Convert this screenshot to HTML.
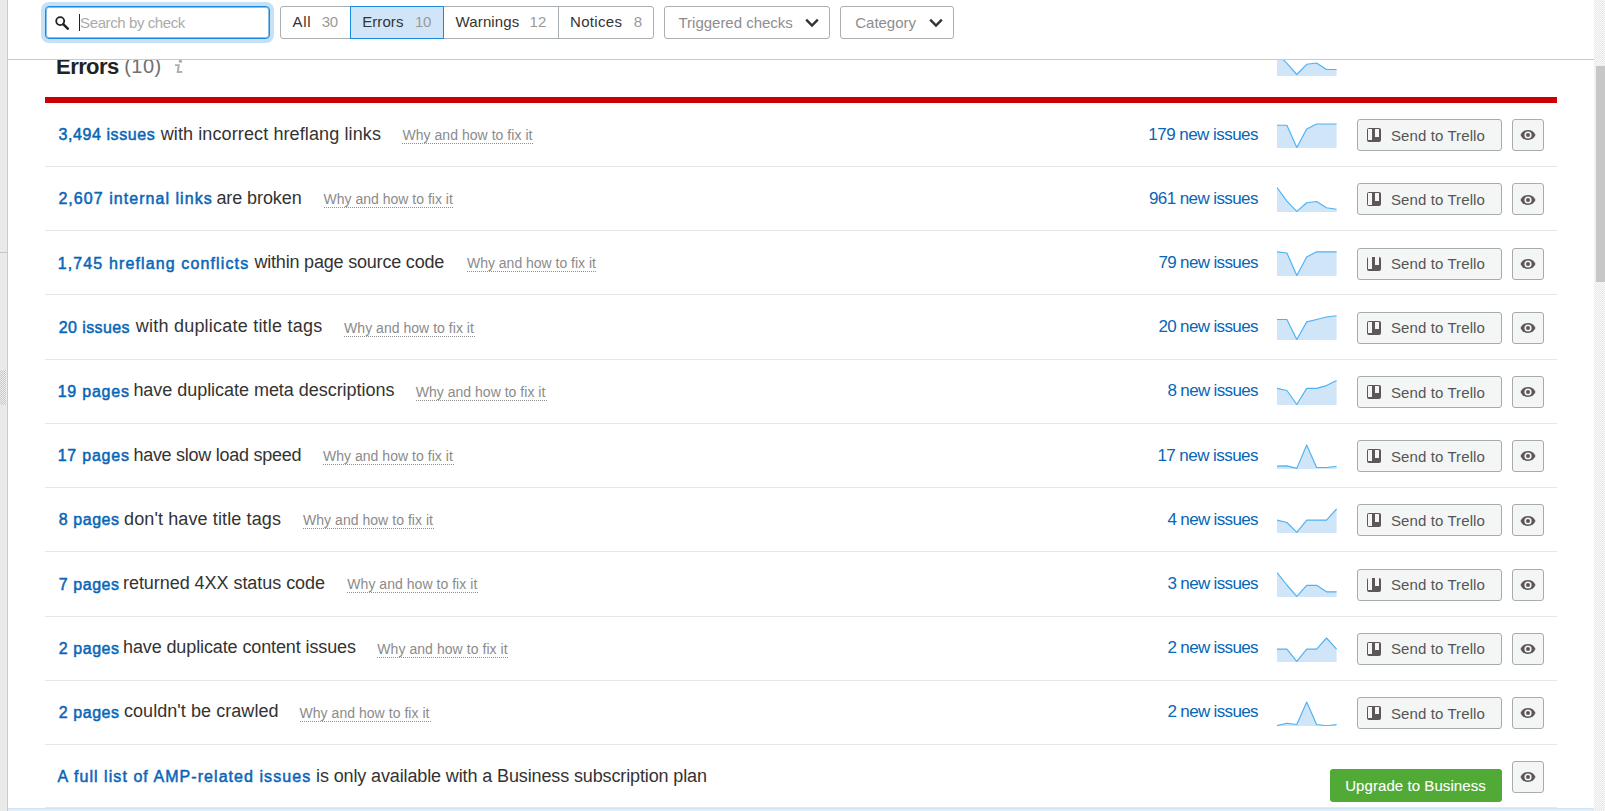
<!DOCTYPE html>
<html><head><meta charset="utf-8"><style>
html,body{margin:0;padding:0;}
body{width:1605px;height:811px;overflow:hidden;position:relative;background:#fff;font-family:"Liberation Sans", sans-serif;}
.t{position:absolute;white-space:pre;}
.lstrip{position:absolute;left:0;top:0;width:7px;height:811px;background:#e9ebea;}
.lline{position:absolute;left:7px;top:0;width:1px;height:811px;background:#c8cbca;}
.sb{position:absolute;left:1594px;top:0;width:11px;height:811px;background:repeating-conic-gradient(#e8e9e8 0 25%,#f9f9f9 0 50%) 0 0/2px 2px;}
.thumb{position:absolute;left:1596px;top:66px;width:9px;height:216px;background:#c6c7c6;}
.hdr{position:absolute;left:8px;top:0;width:1586px;height:59px;background:#fff;border-bottom:1px solid #c8cbca;z-index:10;}
.red{position:absolute;left:45px;top:97px;width:1512px;height:6px;background:#cc0000;}
.ul{position:absolute;height:1px;background:repeating-linear-gradient(90deg,#8f8f8f 0 1px,transparent 1px 2px);}
.sep{position:absolute;left:45px;width:1512px;height:1px;background:#e2e9ee;}
.sp{position:absolute;left:1277px;}
.btn{position:absolute;box-sizing:border-box;height:32px;border:1px solid #a5acaf;border-radius:3px;background:#f4f5f5;}
.trello{left:1357px;width:145px;}
.eye{left:1512px;width:32px;}
.eye svg{position:absolute;left:6.5px;top:9.2px;}
.ti{position:absolute;left:9px;top:8px;width:14px;height:14px;background:#5e5758;border-radius:2px;}
.ti b{position:absolute;left:1.3px;top:0.9px;width:4px;height:11.3px;background:#f4f5f5;}
.ti s{position:absolute;left:8px;top:0.9px;width:3.7px;height:7.6px;background:#f4f5f5;}
.green{position:absolute;left:1330px;top:769px;width:172px;height:33px;background:#50aa35;border-radius:3px;}
.search{position:absolute;left:45px;top:6px;width:225px;height:33px;box-sizing:border-box;border:1px solid #1a8adf;border-radius:4px;box-shadow:inset 0 0 0 1px rgba(26,138,223,0.55),0 0 0 4px #c6e1f6;background:#fff;}
.seg{position:absolute;left:280px;top:6px;width:374px;height:33px;box-sizing:border-box;border:1px solid #a9b0b3;border-radius:3px;background:#fff;}
.segon{position:absolute;left:350px;top:6px;width:94px;height:33px;box-sizing:border-box;border:1px solid #1a8adf;background:#d0e5f8;}
.segdiv{position:absolute;left:558px;top:6px;width:1px;height:33px;background:#a9b0b3;}
.dd{position:absolute;top:6px;height:33px;box-sizing:border-box;border:1px solid #a9b0b3;border-radius:3px;background:#fff;}
.bottom1{position:absolute;left:45px;top:807px;width:1512px;height:1px;background:#e6e9eb;}
.bottom2{position:absolute;left:8px;top:808px;width:1586px;height:1px;background:#cfe4f5;}
.bottom3{position:absolute;left:8px;top:809px;width:1586px;height:2px;background:#deedf8;}
</style></head><body>
<div class="lstrip"></div><div class="lline"></div>
<div style="position:absolute;left:0;top:252px;width:7px;height:1px;background:#c5c6c5"></div>
<div style="position:absolute;left:0;top:370px;width:6px;height:35px;background:repeating-conic-gradient(#c8cac8 0 25%,#edefed 0 50%) 0 0/2px 2px"></div>
<div class="sb"></div><div class="thumb"></div>
<div class="red"></div>
<div class="sep" style="top:166px"></div><div class="sep" style="top:230px"></div><div class="sep" style="top:294px"></div><div class="sep" style="top:359px"></div><div class="sep" style="top:423px"></div><div class="sep" style="top:487px"></div><div class="sep" style="top:551px"></div><div class="sep" style="top:616px"></div><div class="sep" style="top:680px"></div><div class="sep" style="top:744px"></div>
<div class="ul" style="left:402px;top:143px;width:132px"></div><div class="ul" style="left:324px;top:207px;width:130px"></div><div class="ul" style="left:467px;top:271px;width:130px"></div><div class="ul" style="left:344px;top:336px;width:131px"></div><div class="ul" style="left:416px;top:400px;width:131px"></div><div class="ul" style="left:323px;top:464px;width:131px"></div><div class="ul" style="left:303px;top:528px;width:131px"></div><div class="ul" style="left:347px;top:592px;width:131px"></div><div class="ul" style="left:377px;top:657px;width:132px"></div><div class="ul" style="left:300px;top:721px;width:131px"></div>
<svg class="sp" style="top:49.6px" width="60" height="26" viewBox="0 0 60 26"><path d="M0,26 L0.0,3.2 L9.9,13.3 L19.8,24.5 L29.7,14.3 L39.6,13.0 L49.5,19.5 L59.6,19.5 L59.6,26 Z" fill="#d0e5f7"/><polyline points="0.0,3.2 9.9,13.3 19.8,24.5 29.7,14.3 39.6,13.0 49.5,19.5 59.6,19.5" fill="none" stroke="#4fb2f0" stroke-width="1.15" stroke-linejoin="round"/></svg><svg class="sp" style="top:121.6px" width="60" height="26" viewBox="0 0 60 26"><path d="M0,26 L0.0,3.2 L9.9,3.2 L19.8,25.4 L29.7,6.9 L39.6,2.0 L49.5,2.0 L59.6,2.0 L59.6,26 Z" fill="#d0e5f7"/><polyline points="0.0,3.2 9.9,3.2 19.8,25.4 29.7,6.9 39.6,2.0 49.5,2.0 59.6,2.0" fill="none" stroke="#4fb2f0" stroke-width="1.15" stroke-linejoin="round"/></svg><svg class="sp" style="top:185.7px" width="60" height="26" viewBox="0 0 60 26"><path d="M0,26 L0.0,1.6 L9.9,15.2 L19.8,25.4 L29.7,16.8 L39.6,15.5 L49.5,21.7 L59.6,23.2 L59.6,26 Z" fill="#d0e5f7"/><polyline points="0.0,1.6 9.9,15.2 19.8,25.4 29.7,16.8 39.6,15.5 49.5,21.7 59.6,23.2" fill="none" stroke="#4fb2f0" stroke-width="1.15" stroke-linejoin="round"/></svg><svg class="sp" style="top:249.6px" width="60" height="26" viewBox="0 0 60 26"><path d="M0,26 L0.0,1.8 L9.9,3.0 L19.8,25.5 L29.7,7.0 L39.6,1.8 L49.5,1.8 L59.6,1.8 L59.6,26 Z" fill="#d0e5f7"/><polyline points="0.0,1.8 9.9,3.0 19.8,25.5 29.7,7.0 39.6,1.8 49.5,1.8 59.6,1.8" fill="none" stroke="#4fb2f0" stroke-width="1.15" stroke-linejoin="round"/></svg><svg class="sp" style="top:313.6px" width="60" height="26" viewBox="0 0 60 26"><path d="M0,26 L0.0,5.5 L9.9,5.5 L19.8,25.5 L29.7,7.9 L39.6,5.5 L49.5,3.0 L59.6,1.8 L59.6,26 Z" fill="#d0e5f7"/><polyline points="0.0,5.5 9.9,5.5 19.8,25.5 29.7,7.9 39.6,5.5 49.5,3.0 59.6,1.8" fill="none" stroke="#4fb2f0" stroke-width="1.15" stroke-linejoin="round"/></svg><svg class="sp" style="top:378.7px" width="60" height="26" viewBox="0 0 60 26"><path d="M0,26 L0.0,9.4 L9.9,11.5 L19.8,25.5 L29.7,9.4 L39.6,9.4 L49.5,6.6 L59.6,1.6 L59.6,26 Z" fill="#d0e5f7"/><polyline points="0.0,9.4 9.9,11.5 19.8,25.5 29.7,9.4 39.6,9.4 49.5,6.6 59.6,1.6" fill="none" stroke="#4fb2f0" stroke-width="1.15" stroke-linejoin="round"/></svg><svg class="sp" style="top:442.7px" width="60" height="26" viewBox="0 0 60 26"><path d="M0,26 L0.0,23.2 L9.9,22.9 L19.8,25.4 L29.7,2.0 L39.6,24.5 L49.5,24.5 L59.6,23.2 L59.6,26 Z" fill="#d0e5f7"/><polyline points="0.0,23.2 9.9,22.9 19.8,25.4 29.7,2.0 39.6,24.5 49.5,24.5 59.6,23.2" fill="none" stroke="#4fb2f0" stroke-width="1.15" stroke-linejoin="round"/></svg><svg class="sp" style="top:506.7px" width="60" height="26" viewBox="0 0 60 26"><path d="M0,26 L0.0,13.1 L9.9,15.5 L19.8,25.4 L29.7,13.1 L39.6,13.1 L49.5,13.1 L59.6,2.0 L59.6,26 Z" fill="#d0e5f7"/><polyline points="0.0,13.1 9.9,15.5 19.8,25.4 29.7,13.1 39.6,13.1 49.5,13.1 59.6,2.0" fill="none" stroke="#4fb2f0" stroke-width="1.15" stroke-linejoin="round"/></svg><svg class="sp" style="top:570.7px" width="60" height="26" viewBox="0 0 60 26"><path d="M0,26 L0.0,1.6 L9.9,14.0 L19.8,25.4 L29.7,14.3 L39.6,14.3 L49.5,20.8 L59.6,20.8 L59.6,26 Z" fill="#d0e5f7"/><polyline points="0.0,1.6 9.9,14.0 19.8,25.4 29.7,14.3 39.6,14.3 49.5,20.8 59.6,20.8" fill="none" stroke="#4fb2f0" stroke-width="1.15" stroke-linejoin="round"/></svg><svg class="sp" style="top:635.7px" width="60" height="26" viewBox="0 0 60 26"><path d="M0,26 L0.0,13.1 L9.9,13.1 L19.8,25.4 L29.7,13.1 L39.6,13.1 L49.5,2.0 L59.6,13.1 L59.6,26 Z" fill="#d0e5f7"/><polyline points="0.0,13.1 9.9,13.1 19.8,25.4 29.7,13.1 39.6,13.1 49.5,2.0 59.6,13.1" fill="none" stroke="#4fb2f0" stroke-width="1.15" stroke-linejoin="round"/></svg><svg class="sp" style="top:699.7px" width="60" height="26" viewBox="0 0 60 26"><path d="M0,26 L0.0,25.7 L9.9,23.2 L19.8,24.5 L29.7,2.0 L39.6,24.5 L49.5,25.7 L59.6,24.5 L59.6,26 Z" fill="#d0e5f7"/><polyline points="0.0,25.7 9.9,23.2 19.8,24.5 29.7,2.0 39.6,24.5 49.5,25.7 59.6,24.5" fill="none" stroke="#4fb2f0" stroke-width="1.15" stroke-linejoin="round"/></svg>
<div class="btn trello" style="top:119.2px"><i class="ti"><b></b><s></s></i></div><div class="btn eye" style="top:119.2px"><svg width="16" height="12" viewBox="0 0 16 12"><path d="M0.5,6 A8.2,8.2 0 0 1 15.5,6 A8.2,8.2 0 0 1 0.5,6Z" fill="#5e5758"/><circle cx="8" cy="6" r="3.6" fill="#f4f5f5"/><circle cx="8" cy="6" r="2.0" fill="#5e5758"/></svg></div><div class="btn trello" style="top:183.4px"><i class="ti"><b></b><s></s></i></div><div class="btn eye" style="top:183.4px"><svg width="16" height="12" viewBox="0 0 16 12"><path d="M0.5,6 A8.2,8.2 0 0 1 15.5,6 A8.2,8.2 0 0 1 0.5,6Z" fill="#5e5758"/><circle cx="8" cy="6" r="3.6" fill="#f4f5f5"/><circle cx="8" cy="6" r="2.0" fill="#5e5758"/></svg></div><div class="btn trello" style="top:247.6px"><i class="ti"><b></b><s></s></i></div><div class="btn eye" style="top:247.6px"><svg width="16" height="12" viewBox="0 0 16 12"><path d="M0.5,6 A8.2,8.2 0 0 1 15.5,6 A8.2,8.2 0 0 1 0.5,6Z" fill="#5e5758"/><circle cx="8" cy="6" r="3.6" fill="#f4f5f5"/><circle cx="8" cy="6" r="2.0" fill="#5e5758"/></svg></div><div class="btn trello" style="top:311.8px"><i class="ti"><b></b><s></s></i></div><div class="btn eye" style="top:311.8px"><svg width="16" height="12" viewBox="0 0 16 12"><path d="M0.5,6 A8.2,8.2 0 0 1 15.5,6 A8.2,8.2 0 0 1 0.5,6Z" fill="#5e5758"/><circle cx="8" cy="6" r="3.6" fill="#f4f5f5"/><circle cx="8" cy="6" r="2.0" fill="#5e5758"/></svg></div><div class="btn trello" style="top:376.0px"><i class="ti"><b></b><s></s></i></div><div class="btn eye" style="top:376.0px"><svg width="16" height="12" viewBox="0 0 16 12"><path d="M0.5,6 A8.2,8.2 0 0 1 15.5,6 A8.2,8.2 0 0 1 0.5,6Z" fill="#5e5758"/><circle cx="8" cy="6" r="3.6" fill="#f4f5f5"/><circle cx="8" cy="6" r="2.0" fill="#5e5758"/></svg></div><div class="btn trello" style="top:440.2px"><i class="ti"><b></b><s></s></i></div><div class="btn eye" style="top:440.2px"><svg width="16" height="12" viewBox="0 0 16 12"><path d="M0.5,6 A8.2,8.2 0 0 1 15.5,6 A8.2,8.2 0 0 1 0.5,6Z" fill="#5e5758"/><circle cx="8" cy="6" r="3.6" fill="#f4f5f5"/><circle cx="8" cy="6" r="2.0" fill="#5e5758"/></svg></div><div class="btn trello" style="top:504.4px"><i class="ti"><b></b><s></s></i></div><div class="btn eye" style="top:504.4px"><svg width="16" height="12" viewBox="0 0 16 12"><path d="M0.5,6 A8.2,8.2 0 0 1 15.5,6 A8.2,8.2 0 0 1 0.5,6Z" fill="#5e5758"/><circle cx="8" cy="6" r="3.6" fill="#f4f5f5"/><circle cx="8" cy="6" r="2.0" fill="#5e5758"/></svg></div><div class="btn trello" style="top:568.6px"><i class="ti"><b></b><s></s></i></div><div class="btn eye" style="top:568.6px"><svg width="16" height="12" viewBox="0 0 16 12"><path d="M0.5,6 A8.2,8.2 0 0 1 15.5,6 A8.2,8.2 0 0 1 0.5,6Z" fill="#5e5758"/><circle cx="8" cy="6" r="3.6" fill="#f4f5f5"/><circle cx="8" cy="6" r="2.0" fill="#5e5758"/></svg></div><div class="btn trello" style="top:632.8px"><i class="ti"><b></b><s></s></i></div><div class="btn eye" style="top:632.8px"><svg width="16" height="12" viewBox="0 0 16 12"><path d="M0.5,6 A8.2,8.2 0 0 1 15.5,6 A8.2,8.2 0 0 1 0.5,6Z" fill="#5e5758"/><circle cx="8" cy="6" r="3.6" fill="#f4f5f5"/><circle cx="8" cy="6" r="2.0" fill="#5e5758"/></svg></div><div class="btn trello" style="top:697.0px"><i class="ti"><b></b><s></s></i></div><div class="btn eye" style="top:697.0px"><svg width="16" height="12" viewBox="0 0 16 12"><path d="M0.5,6 A8.2,8.2 0 0 1 15.5,6 A8.2,8.2 0 0 1 0.5,6Z" fill="#5e5758"/><circle cx="8" cy="6" r="3.6" fill="#f4f5f5"/><circle cx="8" cy="6" r="2.0" fill="#5e5758"/></svg></div><div class="btn eye" style="top:761.3px"><svg width="16" height="12" viewBox="0 0 16 12"><path d="M0.5,6 A8.2,8.2 0 0 1 15.5,6 A8.2,8.2 0 0 1 0.5,6Z" fill="#5e5758"/><circle cx="8" cy="6" r="3.6" fill="#f4f5f5"/><circle cx="8" cy="6" r="2.0" fill="#5e5758"/></svg></div><div class="green"></div>
<div class="bottom1"></div><div class="bottom2"></div><div class="bottom3"></div>
<svg style="position:absolute;left:173px;top:56px" width="12" height="18" viewBox="0 0 12 18"><circle cx="7.4" cy="5.2" r="1.7" fill="#a9afb2"/><path d="M1.9,8.3 L6.9,8.3 L5.9,15.1 L9.2,15.1 L9.2,16.9 L3.6,16.9 L4.6,10.1 L1.9,10.1 Z" fill="#a9afb2"/></svg>
<div class="hdr"></div>
<div class="search" style="z-index:11"></div>
<svg style="position:absolute;left:55px;top:15px;z-index:12" width="15" height="15" viewBox="0 0 15 15"><circle cx="5.2" cy="6.1" r="4.0" fill="none" stroke="#222" stroke-width="1.8"/><path d="M8.4,9.3 L12.8,13.7" stroke="#222" stroke-width="2.5" stroke-linecap="round"/></svg>
<div style="position:absolute;left:79px;top:14px;width:1px;height:17px;background:#222;z-index:12"></div>
<div class="seg" style="z-index:11"></div>
<div class="segon" style="z-index:11"></div>
<div class="segdiv" style="z-index:11"></div>
<div class="dd" style="left:664px;width:166px;z-index:11"></div>
<div class="dd" style="left:840px;width:114px;z-index:11"></div>
<svg style="position:absolute;left:805px;top:18px;z-index:12" width="14" height="10" viewBox="0 0 14 10"><path d="M1.2,1.6 L7,7.6 L12.8,1.6" fill="none" stroke="#333" stroke-width="2.4"/></svg>
<svg style="position:absolute;left:929px;top:18px;z-index:12" width="14" height="10" viewBox="0 0 14 10"><path d="M1.2,1.6 L7,7.6 L12.8,1.6" fill="none" stroke="#333" stroke-width="2.4"/></svg>
<div class="t" style="left:80.10px;top:14.70px;font-size:15px;line-height:15px;color:#ababab;letter-spacing:-0.406px;z-index:11">Search by check</div><div class="t" style="left:292.50px;top:13.70px;font-size:15px;line-height:15px;color:#333333;letter-spacing:0.681px;z-index:11">All</div><div class="t" style="left:321.80px;top:13.70px;font-size:15px;line-height:15px;color:#9a9a9a;letter-spacing:-0.442px;z-index:11">30</div><div class="t" style="left:362.20px;top:13.70px;font-size:15px;line-height:15px;color:#333333;letter-spacing:0.073px;z-index:11">Errors</div><div class="t" style="left:415.10px;top:13.70px;font-size:15px;line-height:15px;color:#9a9a9a;letter-spacing:-0.442px;z-index:11">10</div><div class="t" style="left:455.60px;top:13.70px;font-size:15px;line-height:15px;color:#333333;letter-spacing:0.115px;z-index:11">Warnings</div><div class="t" style="left:529.40px;top:13.70px;font-size:15px;line-height:15px;color:#9a9a9a;letter-spacing:0.358px;z-index:11">12</div><div class="t" style="left:570.00px;top:13.70px;font-size:15px;line-height:15px;color:#333333;letter-spacing:0.314px;z-index:11">Notices</div><div class="t" style="left:633.80px;top:13.70px;font-size:15px;line-height:15px;color:#9a9a9a;letter-spacing:-0.500px;z-index:11">8</div><div class="t" style="left:678.50px;top:14.50px;font-size:15px;line-height:15px;color:#8d8d8d;letter-spacing:-0.013px;z-index:11">Triggered checks</div><div class="t" style="left:855.30px;top:14.50px;font-size:15px;line-height:15px;color:#8d8d8d;letter-spacing:-0.038px;z-index:11">Category</div><div class="t" style="left:56.10px;top:55.80px;font-size:22px;line-height:22px;color:#222222;letter-spacing:-0.599px;z-index:1;font-weight:bold">Errors</div><div class="t" style="left:124.20px;top:56.30px;font-size:20px;line-height:20px;color:#707070;letter-spacing:0.465px;z-index:1">(10)</div><div class="t" style="left:58.50px;top:127.10px;font-size:16px;line-height:16px;color:#0866b8;letter-spacing:0.579px;z-index:1;-webkit-text-stroke:0.5px #0866b8">3,494 issues</div><div class="t" style="left:160.70px;top:124.60px;font-size:18px;line-height:18px;color:#333333;letter-spacing:0.111px;z-index:1">with incorrect hreflang links</div><div class="t" style="left:402.40px;top:128.00px;font-size:14px;line-height:14px;color:#8b8b8b;letter-spacing:0.046px;z-index:1">Why and how to fix it</div><div class="t" style="left:1148.30px;top:125.60px;font-size:17px;line-height:17px;color:#0866b8;letter-spacing:-0.537px;z-index:1">179 new issues</div><div class="t" style="left:1391.00px;top:127.80px;font-size:15px;line-height:15px;color:#555555;letter-spacing:0.101px;z-index:1">Send to Trello</div><div class="t" style="left:58.40px;top:191.30px;font-size:16px;line-height:16px;color:#0866b8;letter-spacing:1.047px;z-index:1;-webkit-text-stroke:0.5px #0866b8">2,607 internal links</div><div class="t" style="left:216.40px;top:188.80px;font-size:18px;line-height:18px;color:#333333;letter-spacing:-0.083px;z-index:1">are broken</div><div class="t" style="left:323.50px;top:192.20px;font-size:14px;line-height:14px;color:#8b8b8b;letter-spacing:0.011px;z-index:1">Why and how to fix it</div><div class="t" style="left:1148.90px;top:189.80px;font-size:17px;line-height:17px;color:#0866b8;letter-spacing:-0.583px;z-index:1">961 new issues</div><div class="t" style="left:1391.00px;top:192.00px;font-size:15px;line-height:15px;color:#555555;letter-spacing:0.101px;z-index:1">Send to Trello</div><div class="t" style="left:57.70px;top:255.50px;font-size:16px;line-height:16px;color:#0866b8;letter-spacing:1.128px;z-index:1;-webkit-text-stroke:0.5px #0866b8">1,745 hreflang conflicts</div><div class="t" style="left:254.40px;top:253.00px;font-size:18px;line-height:18px;color:#333333;letter-spacing:-0.192px;z-index:1">within page source code</div><div class="t" style="left:467.00px;top:256.40px;font-size:14px;line-height:14px;color:#8b8b8b;letter-spacing:-0.014px;z-index:1">Why and how to fix it</div><div class="t" style="left:1158.40px;top:254.00px;font-size:17px;line-height:17px;color:#0866b8;letter-spacing:-0.636px;z-index:1">79 new issues</div><div class="t" style="left:1391.00px;top:256.20px;font-size:15px;line-height:15px;color:#555555;letter-spacing:0.101px;z-index:1">Send to Trello</div><div class="t" style="left:58.70px;top:319.70px;font-size:16px;line-height:16px;color:#0866b8;letter-spacing:0.413px;z-index:1;-webkit-text-stroke:0.5px #0866b8">20 issues</div><div class="t" style="left:135.80px;top:317.20px;font-size:18px;line-height:18px;color:#333333;letter-spacing:0.221px;z-index:1">with duplicate title tags</div><div class="t" style="left:344.10px;top:320.60px;font-size:14px;line-height:14px;color:#8b8b8b;letter-spacing:0.031px;z-index:1">Why and how to fix it</div><div class="t" style="left:1158.40px;top:318.20px;font-size:17px;line-height:17px;color:#0866b8;letter-spacing:-0.636px;z-index:1">20 new issues</div><div class="t" style="left:1391.00px;top:320.40px;font-size:15px;line-height:15px;color:#555555;letter-spacing:0.101px;z-index:1">Send to Trello</div><div class="t" style="left:57.70px;top:383.90px;font-size:16px;line-height:16px;color:#0866b8;letter-spacing:0.766px;z-index:1;-webkit-text-stroke:0.5px #0866b8">19 pages</div><div class="t" style="left:133.40px;top:381.40px;font-size:18px;line-height:18px;color:#333333;letter-spacing:-0.037px;z-index:1">have duplicate meta descriptions</div><div class="t" style="left:415.70px;top:384.80px;font-size:14px;line-height:14px;color:#8b8b8b;letter-spacing:0.026px;z-index:1">Why and how to fix it</div><div class="t" style="left:1167.50px;top:382.40px;font-size:17px;line-height:17px;color:#0866b8;letter-spacing:-0.661px;z-index:1">8 new issues</div><div class="t" style="left:1391.00px;top:384.60px;font-size:15px;line-height:15px;color:#555555;letter-spacing:0.101px;z-index:1">Send to Trello</div><div class="t" style="left:57.70px;top:448.10px;font-size:16px;line-height:16px;color:#0866b8;letter-spacing:0.766px;z-index:1;-webkit-text-stroke:0.5px #0866b8">17 pages</div><div class="t" style="left:133.40px;top:445.60px;font-size:18px;line-height:18px;color:#333333;letter-spacing:-0.264px;z-index:1">have slow load speed</div><div class="t" style="left:322.90px;top:449.00px;font-size:14px;line-height:14px;color:#8b8b8b;letter-spacing:0.041px;z-index:1">Why and how to fix it</div><div class="t" style="left:1157.40px;top:446.60px;font-size:17px;line-height:17px;color:#0866b8;letter-spacing:-0.552px;z-index:1">17 new issues</div><div class="t" style="left:1391.00px;top:448.80px;font-size:15px;line-height:15px;color:#555555;letter-spacing:0.101px;z-index:1">Send to Trello</div><div class="t" style="left:58.70px;top:512.30px;font-size:16px;line-height:16px;color:#0866b8;letter-spacing:0.577px;z-index:1;-webkit-text-stroke:0.5px #0866b8">8 pages</div><div class="t" style="left:124.00px;top:509.80px;font-size:18px;line-height:18px;color:#333333;letter-spacing:0.123px;z-index:1">don&#x27;t have title tags</div><div class="t" style="left:303.00px;top:513.20px;font-size:14px;line-height:14px;color:#8b8b8b;letter-spacing:0.041px;z-index:1">Why and how to fix it</div><div class="t" style="left:1167.50px;top:510.80px;font-size:17px;line-height:17px;color:#0866b8;letter-spacing:-0.661px;z-index:1">4 new issues</div><div class="t" style="left:1391.00px;top:513.00px;font-size:15px;line-height:15px;color:#555555;letter-spacing:0.101px;z-index:1">Send to Trello</div><div class="t" style="left:58.70px;top:576.50px;font-size:16px;line-height:16px;color:#0866b8;letter-spacing:0.577px;z-index:1;-webkit-text-stroke:0.5px #0866b8">7 pages</div><div class="t" style="left:123.00px;top:574.00px;font-size:18px;line-height:18px;color:#333333;letter-spacing:-0.048px;z-index:1">returned 4XX status code</div><div class="t" style="left:347.30px;top:577.40px;font-size:14px;line-height:14px;color:#8b8b8b;letter-spacing:0.041px;z-index:1">Why and how to fix it</div><div class="t" style="left:1167.50px;top:575.00px;font-size:17px;line-height:17px;color:#0866b8;letter-spacing:-0.661px;z-index:1">3 new issues</div><div class="t" style="left:1391.00px;top:577.20px;font-size:15px;line-height:15px;color:#555555;letter-spacing:0.101px;z-index:1">Send to Trello</div><div class="t" style="left:58.70px;top:640.70px;font-size:16px;line-height:16px;color:#0866b8;letter-spacing:0.577px;z-index:1;-webkit-text-stroke:0.5px #0866b8">2 pages</div><div class="t" style="left:123.00px;top:638.20px;font-size:18px;line-height:18px;color:#333333;letter-spacing:-0.113px;z-index:1">have duplicate content issues</div><div class="t" style="left:377.30px;top:641.60px;font-size:14px;line-height:14px;color:#8b8b8b;letter-spacing:0.061px;z-index:1">Why and how to fix it</div><div class="t" style="left:1167.50px;top:639.20px;font-size:17px;line-height:17px;color:#0866b8;letter-spacing:-0.661px;z-index:1">2 new issues</div><div class="t" style="left:1391.00px;top:641.40px;font-size:15px;line-height:15px;color:#555555;letter-spacing:0.101px;z-index:1">Send to Trello</div><div class="t" style="left:58.70px;top:704.90px;font-size:16px;line-height:16px;color:#0866b8;letter-spacing:0.577px;z-index:1;-webkit-text-stroke:0.5px #0866b8">2 pages</div><div class="t" style="left:124.00px;top:702.40px;font-size:18px;line-height:18px;color:#333333;letter-spacing:0.055px;z-index:1">couldn&#x27;t be crawled</div><div class="t" style="left:299.50px;top:705.80px;font-size:14px;line-height:14px;color:#8b8b8b;letter-spacing:0.041px;z-index:1">Why and how to fix it</div><div class="t" style="left:1167.50px;top:703.40px;font-size:17px;line-height:17px;color:#0866b8;letter-spacing:-0.661px;z-index:1">2 new issues</div><div class="t" style="left:1391.00px;top:705.60px;font-size:15px;line-height:15px;color:#555555;letter-spacing:0.101px;z-index:1">Send to Trello</div><div class="t" style="left:57.60px;top:769.10px;font-size:16px;line-height:16px;color:#0866b8;letter-spacing:1.056px;z-index:1;-webkit-text-stroke:0.5px #0866b8">A full list of AMP-related issues</div><div class="t" style="left:316.00px;top:766.60px;font-size:18px;line-height:18px;color:#333333;letter-spacing:-0.124px;z-index:1">is only available with a Business subscription plan</div><div class="t" style="left:1345.20px;top:777.90px;font-size:15px;line-height:15px;color:#ffffff;letter-spacing:0.070px;z-index:1;-webkit-text-stroke:0.1px #ffffff">Upgrade to Business</div>
</body></html>
